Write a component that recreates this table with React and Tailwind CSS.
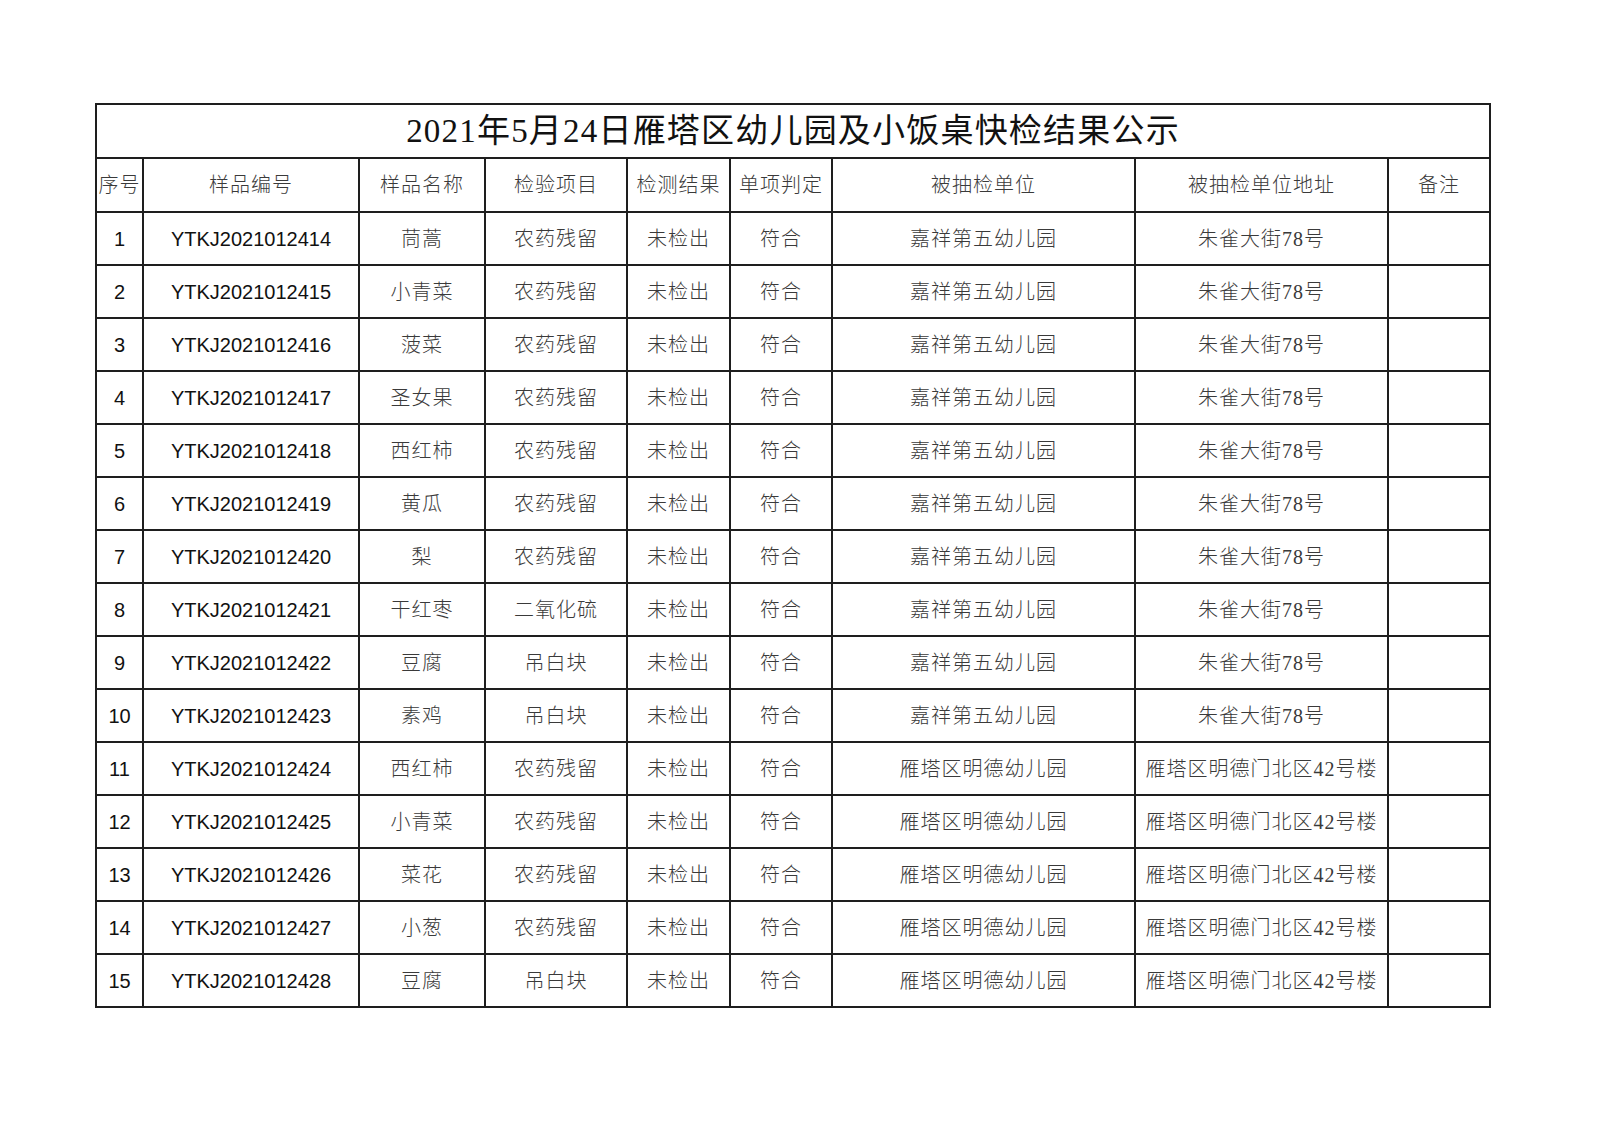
import React from "react";

const colClasses = [
  "w-[47px]",
  "w-[216px]",
  "w-[126px]",
  "w-[142px]",
  "w-[103px]",
  "w-[102px]",
  "w-[303px]",
  "w-[253px]",
  "w-[102px]",
];
const headers = ["序号", "样品编号", "样品名称", "检验项目", "检测结果", "单项判定", "被抽检单位", "被抽检单位地址", "备注"];

const A = ["嘉祥第五幼儿园", "朱雀大街78号"];
const B = ["雁塔区明德幼儿园", "雁塔区明德门北区42号楼"];
const rows = [
  ["茼蒿", "农药残留", A],
  ["小青菜", "农药残留", A],
  ["菠菜", "农药残留", A],
  ["圣女果", "农药残留", A],
  ["西红柿", "农药残留", A],
  ["黄瓜", "农药残留", A],
  ["梨", "农药残留", A],
  ["干红枣", "二氧化硫", A],
  ["豆腐", "吊白块", A],
  ["素鸡", "吊白块", A],
  ["西红柿", "农药残留", B],
  ["小青菜", "农药残留", B],
  ["菜花", "农药残留", B],
  ["小葱", "农药残留", B],
  ["豆腐", "吊白块", B],
];

const cell = "border-2 border-[#1e1e1e] p-0 text-center leading-none whitespace-nowrap";
const cjkCell =
  cell +
  " font-['Liberation_Serif','Noto_Sans_CJK_SC',serif] text-[20px] tracking-[1px] font-light text-[#3a3a3a]";
const sansCell = cell + " font-['Liberation_Sans',Arial,sans-serif] text-[20px] text-[#111]";

export default function App() {
  return (
    <div className="w-[1600px] h-[1131px] bg-white pt-[103px] pl-[95px]">
      <table className="table-fixed border-collapse w-[1396px] border-2 border-[#1e1e1e]">
        <colgroup>
          {colClasses.map((c, i) => (
            <col key={i} className={c} />
          ))}
        </colgroup>
        <tbody>
          <tr className="h-[54px]">
            <td
              colSpan={9}
              className={
                cell +
                " font-['Liberation_Serif','Noto_Sans_CJK_SC',serif] text-[33px] tracking-[1.2px] text-[#111]"
              }
            >
              2021年5月24日雁塔区幼儿园及小饭桌快检结果公示
            </td>
          </tr>
          <tr className="h-[54px]">
            {headers.map((h, i) => (
              <td key={i} className={cjkCell + (i === 0 ? " tracking-[0px]" : "")}>
                {h}
              </td>
            ))}
          </tr>
          {rows.map((r, i) => (
            <tr key={i} className="h-[53px]">
              <td className={sansCell}>{i + 1}</td>
              <td className={sansCell}>{"YTKJ20210124" + (14 + i)}</td>
              <td className={cjkCell}>{r[0]}</td>
              <td className={cjkCell}>{r[1]}</td>
              <td className={cjkCell}>未检出</td>
              <td className={cjkCell}>符合</td>
              <td className={cjkCell}>{r[2][0]}</td>
              <td className={cjkCell}>{r[2][1]}</td>
              <td className={cell}></td>
            </tr>
          ))}
        </tbody>
      </table>
    </div>
  );
}
